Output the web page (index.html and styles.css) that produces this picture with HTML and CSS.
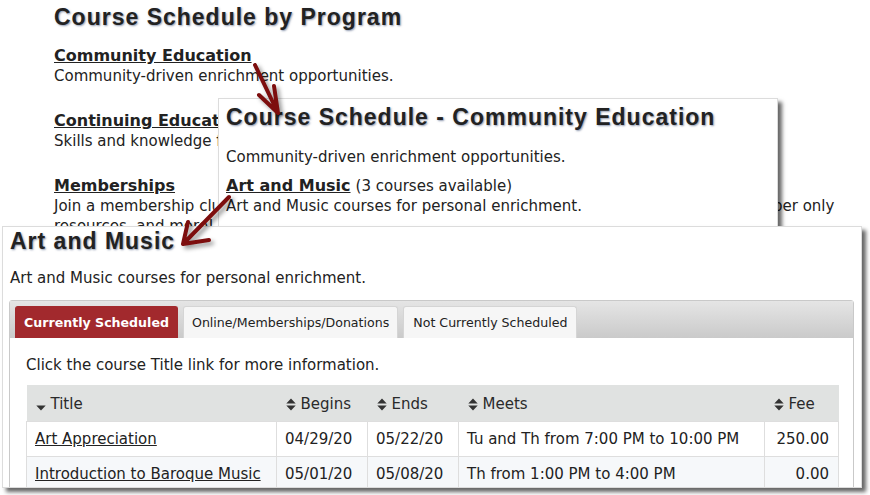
FILE: index.html
```html
<!DOCTYPE html>
<html lang="en">
<head>
<meta charset="utf-8">
<title>Course Schedule by Program</title>
<link rel="stylesheet" href="styles.css">
</head>
<body>
<div class="page">
  <h1 class="heading">Course Schedule by Program</h1>
  <div class="program">
    <a class="prog-link" href="#">Community Education</a>
    <p class="desc">Community-driven enrichment opportunities.</p>
  </div>
  <div class="program">
    <a class="prog-link" href="#">Continuing Education</a>
    <p class="desc">Skills and knowledge for career advancement and professional growth.</p>
  </div>
  <div class="program">
    <a class="prog-link" href="#">Memberships</a>
    <p class="desc">Join a membership club or make a donation to support our programs and get access to all member only resources, and more!</p>
  </div>
</div>

<div class="shot shot-program">
  <h1 class="heading">Course Schedule - Community Education</h1>
  <p class="desc intro">Community-driven enrichment opportunities.</p>
  <div class="category">
    <a class="prog-link" href="#">Art and Music</a> <span class="count">(3 courses available)</span>
  </div>
  <p class="desc">Art and Music courses for personal enrichment.</p>
</div>

<div class="shot shot-category">
  <h1 class="heading">Art and Music</h1>
  <p class="desc intro2">Art and Music courses for personal enrichment.</p>
  <div class="tabs">
    <div class="tab-bar">
      <span class="tab active">Currently Scheduled</span>
      <span class="tab">Online/Memberships/Donations</span>
      <span class="tab">Not Currently Scheduled</span>
    </div>
    <div class="tab-body">
      <p class="hint">Click the course Title link for more information.</p>
      <table class="courses">
        <colgroup>
          <col class="c-title"><col class="c-begins"><col class="c-ends"><col class="c-meets"><col class="c-fee">
        </colgroup>
        <thead>
          <tr>
            <th><span class="th-in"><svg class="sort" viewBox="0 0 10 13" width="10" height="13"><path d="M0.3 7.4 L5 12.6 L9.7 7.4 Z"/></svg>Title</span></th>
            <th><span class="th-in"><svg class="sort" viewBox="0 0 10 13" width="10" height="13"><path d="M0.3 5.6 L5 0.4 L9.7 5.6 Z M0.3 7.4 L5 12.6 L9.7 7.4 Z"/></svg>Begins</span></th>
            <th><span class="th-in"><svg class="sort" viewBox="0 0 10 13" width="10" height="13"><path d="M0.3 5.6 L5 0.4 L9.7 5.6 Z M0.3 7.4 L5 12.6 L9.7 7.4 Z"/></svg>Ends</span></th>
            <th><span class="th-in"><svg class="sort" viewBox="0 0 10 13" width="10" height="13"><path d="M0.3 5.6 L5 0.4 L9.7 5.6 Z M0.3 7.4 L5 12.6 L9.7 7.4 Z"/></svg>Meets</span></th>
            <th><span class="th-in"><svg class="sort" viewBox="0 0 10 13" width="10" height="13"><path d="M0.3 5.6 L5 0.4 L9.7 5.6 Z M0.3 7.4 L5 12.6 L9.7 7.4 Z"/></svg>Fee</span></th>
          </tr>
        </thead>
        <tbody>
          <tr>
            <td><a class="course-link" href="#">Art Appreciation</a></td>
            <td>04/29/20</td>
            <td>05/22/20</td>
            <td>Tu and Th from 7:00 PM to 10:00 PM</td>
            <td class="fee">250.00</td>
          </tr>
          <tr class="alt">
            <td><a class="course-link" href="#">Introduction to Baroque Music</a></td>
            <td>05/01/20</td>
            <td>05/08/20</td>
            <td>Th from 1:00 PM to 4:00 PM</td>
            <td class="fee">0.00</td>
          </tr>
          <tr>
            <td><a class="course-link" href="#">Beginning Watercolor</a></td>
            <td>06/02/20</td>
            <td>06/30/20</td>
            <td>Tu from 6:00 PM to 8:00 PM</td>
            <td class="fee">95.00</td>
          </tr>
        </tbody>
      </table>
    </div>
  </div>
</div>

<svg class="arrows" width="870" height="495" viewBox="0 0 870 495">
  <g class="arrow">
    <path d="M255 65 L278 113 M278 113 L259 95 M278 113 L274 86"/>
  </g>
  <g class="arrow">
    <path d="M229 197 L183 244 M183 244 L188 222 M183 244 L209 240"/>
  </g>
</svg>
</body>
</html>
```

FILE: styles.css
```css
html, body {
  margin: 0;
  padding: 0;
}

body {
  position: relative;
  width: 870px;
  height: 495px;
  overflow: hidden;
  background: #fff;
  color: #222;
  font-family: "DejaVu Sans", Verdana, sans-serif;
}

.page {
  padding: 3px 0 0 54px;
  width: 790px;
}

.heading {
  margin: 0;
  font-family: "Liberation Sans", Arial, sans-serif;
  font-weight: bold;
  font-size: 23px;
  line-height: 28px;
  letter-spacing: 1px;
  color: #222;
  text-shadow: 1px 1px 2px rgba(50, 70, 110, 0.55);
}

.program {
  margin-top: 25px;
}

.page .heading + .program {
  margin-top: 15px;
}

.prog-link {
  font-size: 16px;
  font-weight: bold;
  line-height: 20px;
  color: #222;
  text-decoration: underline;
}

.desc {
  margin: 0;
  font-size: 15px;
  line-height: 20px;
}

/* Overlaid screenshots */
.shot {
  position: absolute;
  box-sizing: border-box;
  background: #fff;
  border: 1px solid #dcdcdc;
  box-shadow: 4px 4px 4px rgba(0, 0, 0, 0.6);
}

.shot-program {
  left: 218px;
  top: 98px;
  width: 560px;
  height: 140px;
  padding: 4px 8px 0 7px;
}

.shot-program .intro {
  margin-top: 16px;
}

.category {
  margin-top: 9px;
  line-height: 20px;
}

.count {
  font-size: 15px;
}

.shot-category {
  left: 2px;
  top: 226px;
  width: 860px;
  height: 262px;
  padding: 0 7px 0 6px;
  overflow: hidden;
}

.shot-category .heading,
.shot-category .intro2 {
  padding-left: 1px;
}

.shot-category .intro2 {
  margin-top: 13px;
}

.tabs {
  margin-top: 12px;
  border: 1px solid #c9c9c9;
  border-radius: 3px 3px 0 0;
}

.tab-bar {
  display: flex;
  gap: 5px;
  box-sizing: border-box;
  height: 37px;
  padding: 5px 4px 0 5px;
  background: linear-gradient(#e5e5e5, #cacaca);
}

.tab {
  font-size: 12.6px;
  line-height: 31px;
  padding: 0 8px;
  background: #f6f6f6;
  border: 1px solid #d5d5d5;
  border-bottom: 0;
  border-radius: 3px 3px 0 0;
  color: #222;
}

.tab:last-child {
  padding: 0 9px;
}

.tab.active {
  background: #a2292d;
  border-color: #a2292d;
  color: #fff;
  font-weight: bold;
  font-size: 12.6px;
}

.tab-body {
  padding: 17px 16px 20px 16px;
  background: #fff;
}

.hint {
  margin: 0 0 10px;
  font-size: 15px;
  line-height: 20px;
}

.courses {
  border-collapse: collapse;
  table-layout: fixed;
  width: 812px;
  font-size: 15px;
}

.c-title { width: 250px; }
.c-begins { width: 91px; }
.c-ends { width: 91px; }
.c-meets { width: 306px; }
.c-fee { width: 74px; }

.courses th {
  height: 36px;
  box-sizing: border-box;
  padding: 4px 10px 0 9px;
  background: #e0e2e1;
  text-align: left;
  font-weight: normal;
  color: #2a2a2a;
}

.th-in {
  display: inline-flex;
  align-items: center;
  gap: 5px;
}

.sort {
  fill: #333;
  flex: none;
}

.courses td {
  height: 34px;
  padding: 0 9px 0 8px;
  border: 1px solid #dedede;
  white-space: nowrap;
}

.courses tr.alt td {
  background: #f6f8fa;
}

.courses td.fee {
  text-align: right;
}

.course-link {
  color: #222;
  text-decoration: underline;
}

/* Annotation arrows drawn over the composite */
.arrows {
  position: absolute;
  left: 0;
  top: 0;
  pointer-events: none;
  filter: drop-shadow(3px 3px 2px rgba(0, 0, 0, 0.4));
}

.arrow path {
  fill: none;
  stroke: #7d0e0e;
  stroke-width: 4;
  stroke-linecap: round;
  stroke-linejoin: round;
}
```
